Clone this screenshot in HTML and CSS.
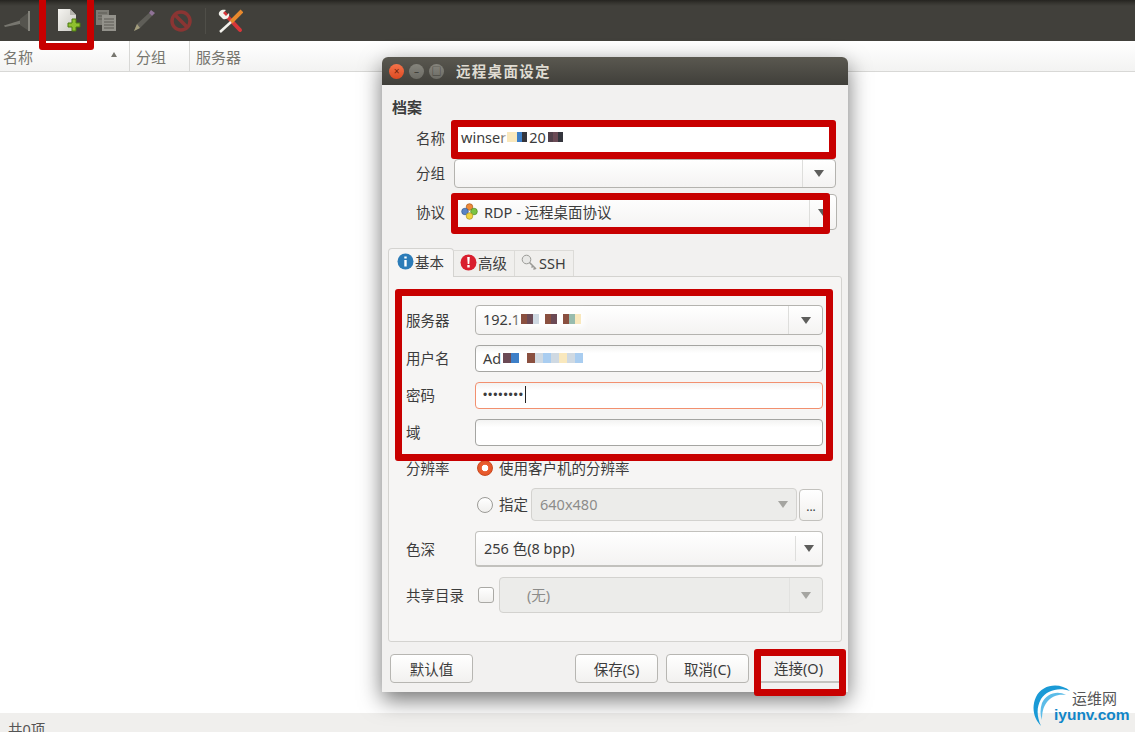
FILE: index.html

```html
<!DOCTYPE html>
<html lang="zh-CN">
<head>
  <meta charset="UTF-8">
  <title>远程桌面设定</title>
  <link rel="stylesheet" href="styles.css">
</head>
<body>
  <div class="app">
    <div class="toolbar">
      <svg class="tool tool-plug" width="28" height="24" viewBox="0 0 28 24">
        <path d="M1 16.5 L17 11.5 L17 15 L2 18 Z" fill="#77766f"/>
        <path d="M17 10 L26 3 L26 22 L17 16 Z" fill="#55544e"/>
        <path d="M26 2 L26 22" stroke="#85847c" stroke-width="2"/>
      </svg>
      <svg class="tool tool-new" width="24" height="25" viewBox="0 0 24 25">
        <defs>
          <linearGradient id="page" x1="0" y1="0" x2="1" y2="1">
            <stop offset="0" stop-color="#f6f5f1"/>
            <stop offset="1" stop-color="#c9c8c2"/>
          </linearGradient>
        </defs>
        <path d="M0 1 H12 L18 7 V23 H0 Z" fill="url(#page)"/>
        <path d="M12 1 V7 H18 Z" fill="#b5b4ae"/>
        <path d="M14 11 H18 V15 H22 V19 H18 V23 H14 V19 H10 V15 H14 Z" fill="#8fc02f" stroke="#4d7a12" stroke-width="1"/>
      </svg>
      <svg class="tool tool-copy" width="22" height="23" viewBox="0 0 22 23">
        <rect x="1" y="1" width="13" height="15" fill="#7d7c75"/>
        <path d="M3 4 H12 M3 7 H12 M3 10 H7" stroke="#5c5b55"/>
        <rect x="7" y="6" width="14" height="16" fill="#93928b"/>
        <path d="M9 10 H19 M9 13 H19 M9 16 H19 M9 19 H19" stroke="#5c5b55"/>
      </svg>
      <svg class="tool tool-pencil" width="24" height="24" viewBox="0 0 24 24">
        <path d="M2 22 L5 15 L17 4 L20 7 L8 19 Z" fill="#5f5e58"/>
        <path d="M2 22 L5 15 L8 19 Z" fill="#a39d7c"/>
        <path d="M17 4 L19 1 L23 4 L20 7 Z" fill="#8f7396"/>
      </svg>
      <svg class="tool tool-stop" width="22" height="22" viewBox="0 0 22 22">
        <circle cx="11" cy="11" r="9" fill="none" stroke="#8a3533" stroke-width="3.5"/>
        <path d="M5 5 L17 17" stroke="#8a3533" stroke-width="3.5"/>
      </svg>
      <span class="tool-sep"></span>
      <svg class="tool tool-prefs" width="25" height="24" viewBox="0 0 25 24">
        <path d="M6 4 L22 21" stroke="#d8363a" stroke-width="4" stroke-linecap="round"/>
        <path d="M24 2 L13 13" stroke="#e8892d" stroke-width="4"/>
        <path d="M13 13 L2 23" stroke="#f2f1ec" stroke-width="2.5"/>
        <path d="M1 6 C0 2 4 0 8 1 L5 4 L8 7 L11 4 C12 8 9 11 5 10 L3 8 Z" fill="#f2f1ec"/>
      </svg>
    </div>

    <div class="list-head">
      <div class="col col-name">名称<span class="sort-arrow"></span></div>
      <div class="col col-group">分组</div>
      <div class="col col-server">服务器</div>
    </div>

    <div class="list-body"></div>
    <div class="statusbar">共0项</div>
  </div>

  <div class="dialog">
    <div class="titlebar">
      <span class="win-btn win-close">×</span>
      <span class="win-btn win-min">–</span>
      <span class="win-btn win-max">□</span>
      <span class="win-title">远程桌面设定</span>
    </div>
    <div class="dialog-body">
      <div class="section-title">档案</div>

      <div class="row row-name">
        <label class="row-label">名称</label>
        <div class="entry entry-name">winser<span class="mosaic"><i class="c1"></i><i class="c1"></i><i class="c2"></i><i class="c3"></i></span><span class="gap-txt">20</span><span class="mosaic"><i class="c4"></i><i class="c5"></i><i class="c3"></i></span></div>
      </div>
      <div class="row row-group">
        <label class="row-label">分组</label>
        <div class="combo combo-wide"><span class="combo-text"></span><span class="combo-arrow"><b></b></span></div>
      </div>
      <div class="row row-proto">
        <label class="row-label">协议</label>
        <div class="combo combo-wide combo-proto">
          <span class="combo-text">
            <svg class="proto-icon" width="17" height="17" viewBox="0 0 17 17">
              <circle cx="8.5" cy="4" r="3.3" fill="#ee8a3a" stroke="#a95c20" stroke-width=".7"/>
              <circle cx="4" cy="8.5" r="3.3" fill="#5b84c4" stroke="#345a92" stroke-width=".7"/>
              <circle cx="13" cy="8.5" r="3.3" fill="#7cc342" stroke="#4d8a20" stroke-width=".7"/>
              <circle cx="8.5" cy="13" r="3.3" fill="#f2d43d" stroke="#a8902a" stroke-width=".7"/>
            </svg>
            RDP - 远程桌面协议
          </span>
          <span class="combo-arrow"><b></b></span>
        </div>
      </div>

      <div class="tabs">
        <div class="tab tab-active">
          <svg width="17" height="17" viewBox="0 0 17 17">
            <circle cx="8.5" cy="8.5" r="8" fill="#2c7cb8"/>
            <path d="M7.3 3.5 H9.7 V5.6 H7.3 Z M7.3 7 H9.7 V13.5 H7.3 Z" fill="#fff"/>
          </svg>基本
        </div>
        <div class="tab">
          <svg width="17" height="17" viewBox="0 0 17 17">
            <circle cx="8.5" cy="8.5" r="8" fill="#d91f2e"/>
            <path d="M7.2 3 H9.8 L9.3 10 H7.7 Z M7.3 11 H9.7 V13.5 H7.3 Z" fill="#fff"/>
          </svg>高级
        </div>
        <div class="tab">
          <svg width="17" height="17" viewBox="0 0 17 17">
            <circle cx="5.5" cy="5.5" r="4.3" fill="#e8e8e6" stroke="#9a9a96"/>
            <path d="M8.5 8.5 L15 15 M12 12 L10.5 13.5 M14 14 L12.5 15.5" stroke="#9a9a96" stroke-width="1.6" fill="none"/>
          </svg>SSH
        </div>
      </div>

      <div class="panel">
        <div class="form-row form-server">
          <label class="form-label">服务器</label>
          <div class="combo"><span class="combo-text">192.1<span class="mosaic mosaic-server"><i class="c6"></i><i class="c5"></i><i class="c7"></i><i class="c8"></i><i class="c6"></i><i class="c5"></i><i class="c8"></i><i class="c6"></i><i class="c9"></i><i class="c1"></i></span></span><span class="combo-arrow combo-arrow-server"><b></b></span></div>
        </div>
        <div class="form-row form-entry">
          <label class="form-label">用户名</label>
          <div class="entry">Ad<span class="mosaic mosaic-user"><i class="c5"></i><i class="c2"></i><i class="c8"></i><i class="c6"></i><i class="c7"></i><i class="c10"></i><i class="c7"></i><i class="c1"></i><i class="c7"></i><i class="c10"></i></span></div>
        </div>
        <div class="form-row form-entry">
          <label class="form-label">密码</label>
          <div class="entry entry-focus"><span class="dots">••••••••</span><span class="caret"></span></div>
        </div>
        <div class="form-row form-entry">
          <label class="form-label">域</label>
          <div class="entry"></div>
        </div>

        <div class="form-row form-res">
          <label class="form-label">分辨率</label>
          <span class="radio radio-on"></span>
          <span class="radio-text">使用客户机的分辨率</span>
        </div>
        <div class="form-row form-custom">
          <span class="form-label"></span>
          <span class="radio"></span>
          <span class="radio-text">指定</span>
          <div class="combo combo-off combo-size"><span class="combo-text">640x480</span><span class="combo-arrow"><b></b></span></div>
          <div class="more-btn">...</div>
        </div>
        <div class="form-row form-depth">
          <label class="form-label">色深</label>
          <div class="combo combo-raised"><span class="combo-text">256 色(8 bpp)</span><span class="combo-arrow"><b></b></span></div>
        </div>
        <div class="form-row form-share">
          <label class="form-label">共享目录</label>
          <span class="check"></span>
          <div class="combo combo-off"><span class="combo-text combo-none">(无)</span><span class="combo-arrow"><b></b></span></div>
        </div>
      </div>

      <div class="actions">
        <button class="btn">默认值</button>
        <button class="btn btn-save">保存(S)</button>
        <button class="btn">取消(C)</button>
        <button class="btn btn-connect">连接(O)</button>
      </div>
    </div>
  </div>

  <!-- red marks drawn over the screenshot -->
  <div class="mark mark-tool"></div>
  <div class="mark mark-name"></div>
  <div class="mark mark-proto"></div>
  <div class="mark mark-panel"></div>
  <div class="mark mark-connect"></div>

  <div class="logo">
    <svg class="logo-arc" width="44" height="44" viewBox="0 0 44 44">
      <path d="M38 7 C28 -2 10 0 4 13 C-1 24 2 35 9 42 C5 33 4 24 9 15 C15 6 27 3 38 7 Z" fill="#1a9ad6"/>
      <path d="M34 11 C25 6 14 10 10 19 C8 25 8 31 10 36 C10 29 11 23 15 18 C20 12 26 10 34 11 Z" fill="#5cbce8"/>
    </svg>
    <span class="logo-cn">运维网</span>
    <span class="logo-en">iyunv.com</span>
  </div>
</body>
</html>
```

FILE: styles.css

```css
* {
  box-sizing: border-box;
}
html, body {
  height: 100%;
}
body {
  margin: 0;
  overflow: hidden;
  background: #fff;
  color: #3c3c3c;
  font-family: "Noto Sans", "Noto Sans CJK SC", sans-serif;
  font-size: 14.5px;
}
.app {
  display: flex;
  flex-direction: column;
  height: 732px;
}

/* toolbar */
.toolbar {
  display: flex;
  align-items: center;
  height: 41px;
  flex: none;
  padding: 0 0 0 3px;
  background: linear-gradient(to bottom, #252420 0, #35342f 3px, #41403b 6px, #41403b 100%);
}
.tool {
  flex: none;
}
.tool-plug { margin-right: 27px; }
.tool-new { margin: 0 13px 0 0; }
.tool-copy { margin-right: 15px; }
.tool-pencil { margin-right: 14px; }
.tool-stop { margin-right: 13px; }
.tool-sep {
  width: 1px;
  height: 26px;
  background: #4f4e48;
  margin-right: 12px;
}

/* list header */
.list-head {
  display: flex;
  flex: none;
  height: 31px;
  background: linear-gradient(to bottom, #fff, #f3f3f2);
  border-bottom: 1px solid #d8d8d6;
  color: #77766f;
  font-size: 15px;
}
.col {
  display: flex;
  align-items: center;
  border-right: 1px solid #d8d8d6;
}
.col-name {
  width: 130px;
  padding-left: 3px;
  position: relative;
}
.col-group {
  width: 60px;
  padding-left: 6px;
}
.col-server {
  padding-left: 6px;
  border-right: 0;
}
.sort-arrow {
  position: absolute;
  left: 111px;
  top: 11px;
  border-left: 3.5px solid transparent;
  border-right: 3.5px solid transparent;
  border-bottom: 5px solid #77766f;
}
.list-body {
  flex: 1;
}
.statusbar {
  flex: none;
  height: 19px;
  padding: 5px 0 0 8px;
  background: #f0efed;
  color: #555;
  line-height: 22px;
  overflow: hidden;
}

/* dialog */
.dialog {
  position: absolute;
  left: 382px;
  top: 57px;
  width: 466px;
  height: 635px;
  background: #f2f1f0;
  border-radius: 6px 6px 0 0;
  box-shadow: 0 8px 22px rgba(0, 0, 0, 0.55);
}
.titlebar {
  display: flex;
  align-items: center;
  height: 28px;
  padding-left: 7px;
  background: linear-gradient(to bottom, #5a5850, #403f3a);
  border-radius: 6px 6px 0 0;
}
.win-btn {
  display: flex;
  align-items: center;
  justify-content: center;
  width: 15px;
  height: 15px;
  margin-right: 5px;
  border-radius: 50%;
  background: linear-gradient(to bottom, #86857d, #6c6b64);
  color: #3d3c37;
  font-size: 10px;
  line-height: 1;
}
.win-close {
  background: linear-gradient(to bottom, #f4734a, #dd4a22);
  color: #70230c;
}
.win-title {
  margin-left: 7px;
  padding-bottom: 2px;
  color: #dfdbd2;
  font-size: 14.5px;
  font-weight: 700;
  letter-spacing: 1.3px;
}
.dialog-body {
  padding: 14px 6px 0;
}
.section-title {
  height: 16px;
  margin-left: 4px;
  line-height: 16px;
  font-size: 15px;
  font-weight: 700;
}

.row {
  display: flex;
  align-items: center;
  margin-left: -6px;
  margin-right: -6px;
}
.row-label {
  width: 63px;
  margin-right: 9px;
  padding-bottom: 2px;
  text-align: right;
  flex: none;
}
.row-name {
  height: 31px;
  margin-top: 9px;
  padding-right: 12px;
}
.row-name .row-label {
  padding-bottom: 5px;
}
.row-group {
  height: 29px;
  margin-top: 4px;
  padding-right: 12px;
}
.row-proto {
  height: 36px;
  margin-top: 6px;
  padding-right: 11px;
}

/* inputs */
.entry {
  display: flex;
  align-items: center;
  flex: 1;
  height: 100%;
  padding: 0 0 2px 7px;
  background: linear-gradient(to bottom, #f3f3f2, #fff 30%);
  border: 1px solid #a5a5a2;
  border-radius: 4px;
  white-space: nowrap;
}
.entry-name {
  padding: 0 0 5px 6px;
  background: #fff;
}
.entry-focus {
  border-color: #f2906f;
}
.dots {
  font-family: "Liberation Sans", sans-serif;
  font-size: 12px;
  letter-spacing: 0.9px;
}
.caret {
  width: 1px;
  height: 17px;
  background: #222;
  margin-left: 1px;
}
.combo {
  display: flex;
  flex: 1;
  height: 100%;
  background: linear-gradient(to bottom, #fff, #f4f3f2);
  border: 1px solid #b4b3af;
  border-radius: 4px;
  min-width: 0;
}
.combo-text {
  display: flex;
  align-items: center;
  flex: 1;
  padding: 0 0 2px 7px;
  white-space: nowrap;
}
.combo-arrow {
  display: flex;
  align-items: center;
  justify-content: center;
  flex: none;
  width: 33px;
  margin: 0;
  border-left: 1px solid #dededc;
}
.combo-arrow-server {
  width: 34px;
}
.combo-arrow b {
  border-left: 5px solid transparent;
  border-right: 5px solid transparent;
  border-top: 7px solid #5e5e5c;
}
.combo-proto .combo-text {
  padding-left: 6px;
}
.combo-proto .combo-arrow {
  width: 27px;
}
.proto-icon {
  margin-right: 6px;
  flex: none;
}
.combo-raised {
  border-bottom-width: 2px;
  border-color: #c2c1bd;
}
.combo-raised .combo-text {
  padding-left: 8px;
}
.combo-raised .combo-arrow {
  width: 27px;
  margin: 4px 0;
}
.combo-off {
  background: #ececea;
  border-color: #d3d2cf;
  color: #8c8c8a;
}
.combo-off .combo-arrow {
  border-left-color: #e2e2e0;
}
.combo-off .combo-arrow b {
  border-top-color: #a5a5a1;
}
.combo-none {
  padding-left: 27px;
}

/* pixelated parts of the screenshot */
.mosaic {
  display: inline-flex;
  height: 10px;
  margin: 0 1px;
  box-shadow: 0 0 6px 3px #fff;
  background: #fff;
}
.mosaic i {
  width: 5px;
  height: 100%;
}
.mosaic-user {
  margin-left: 2px;
  box-shadow: 0 0 3px 1px #fff;
}
.mosaic-user i {
  width: 8px;
}
.mosaic-server i {
  width: 6px;
}
.gap-txt {
  position: relative;
  margin: 0 1px;
}
.c1 { background: #f9e8bd; }
.c2 { background: #3d7fc8; }
.c3 { background: #34353d; }
.c4 { background: #51404a; }
.c5 { background: #6b4a55; }
.c6 { background: #8a5040; }
.c7 { background: #cfd9e2; }
.c8 { background: #fff; }
.c9 { background: #98bcae; }
.c10 { background: #a9cdf0; }

/* tabs */
.tabs {
  display: flex;
  align-items: flex-end;
  height: 28px;
  margin-top: 18px;
  padding-left: 0;
}
.tab {
  display: flex;
  align-items: center;
  height: 26px;
  padding: 0 7px 2px 6px;
  margin-left: 0;
  border: 1px solid #dcdbd8;
  border-width: 1px 1px 0 0;
  background: #f0efed;
  white-space: nowrap;
}
.tab svg {
  margin-right: 1px;
}
.tab-active {
  height: 29px;
  margin-bottom: -1px;
  padding: 0 9px 4px 8px;
  background: #f6f5f4;
  border: 1px solid #d4d3d0;
  border-bottom: 0;
  border-radius: 4px 4px 0 0;
  position: relative;
  z-index: 1;
}
.panel {
  height: 366px;
  padding: 28px 18px 0 17px;
  background: #f6f5f4;
  border: 1px solid #d4d3d0;
  border-radius: 0 3px 3px 3px;
}
.form-row {
  display: flex;
  align-items: center;
}
.form-label {
  flex: none;
  width: 69px;
  padding-bottom: 2px;
  white-space: nowrap;
}
.form-server { height: 30px; }
.form-entry { height: 27px; margin-top: 10px; }
.form-res { height: 18px; margin-top: 13px; }
.form-custom { height: 33px; margin-top: 11px; }
.form-depth { height: 36px; margin-top: 10px; }
.form-share { height: 36px; margin-top: 10px; }

.radio {
  flex: none;
  width: 16px;
  height: 16px;
  margin: 0 6px 0 2px;
  background: linear-gradient(to bottom, #fff, #f0efed);
  border: 1px solid #9c9b97;
  border-radius: 50%;
}
.radio-on {
  background: radial-gradient(circle, #fff 0, #fff 3px, #e95d30 3.6px, #e25224 100%);
  border-color: #c9491f;
}
.radio-text {
  flex: none;
  padding-bottom: 2px;
  white-space: nowrap;
}
.combo-size {
  margin-left: 3px;
  margin-right: 2px;
}
.combo-size .combo-arrow {
  width: 27px;
  border-left-color: #ececea;
}
.combo-size .combo-text {
  padding-left: 8px;
}
.more-btn {
  flex: none;
  width: 24px;
  height: 32px;
  background: linear-gradient(to bottom, #fff, #f1f0ee);
  border: 1px solid #c2c1bd;
  border-radius: 4px;
  text-align: center;
  line-height: 34px;
  font-size: 12px;
}
.check {
  flex: none;
  width: 16px;
  height: 16px;
  margin: 0 5px 0 3px;
  background: linear-gradient(to bottom, #fff, #f0efed);
  border: 1px solid #aaa9a5;
  border-radius: 3px;
}

/* bottom buttons */
.actions {
  display: flex;
  height: 29px;
  margin: 12px 3px 0 2px;
}
.btn {
  width: 83px;
  height: 29px;
  padding: 0 0 1px;
  background: linear-gradient(to bottom, #fff, #f2f1ef);
  border: 1px solid #b7b6b2;
  border-radius: 4px;
  color: #3c3c3c;
  font: inherit;
}
.btn + .btn {
  margin-left: 8px;
}
.btn-save {
  margin-left: auto !important;
}
.actions .btn-connect {
  width: 78px;
  margin-left: 12px;
  padding: 0 3px 0 0;
  border: 0;
  border-bottom: 2px solid #c4c3bf;
  border-radius: 0;
  background: #f4f3f2;
}

/* red marks */
.mark {
  position: absolute;
  border: 7px solid #c80000;
  border-radius: 3px;
}
.mark-tool {
  left: 39px;
  top: -7px;
  width: 55px;
  height: 57px;
}
.mark-name {
  left: 451px;
  top: 120px;
  width: 385px;
  height: 39px;
}
.mark-proto {
  left: 451px;
  top: 193px;
  width: 379px;
  height: 41px;
}
.mark-panel {
  left: 395px;
  top: 289px;
  width: 438px;
  height: 172px;
}
.mark-connect {
  left: 754px;
  top: 649px;
  width: 92px;
  height: 47px;
}

/* watermark */
.logo {
  position: absolute;
  left: 1032px;
  top: 684px;
  width: 100px;
  height: 44px;
}
.logo-arc {
  position: absolute;
  left: 0;
  top: 0;
}
.logo-cn {
  position: absolute;
  left: 40px;
  top: 5px;
  color: #555;
  font-size: 15px;
  line-height: 18px;
}
.logo-en {
  position: absolute;
  left: 22px;
  top: 22px;
  color: #1186c8;
  font-family: "Liberation Sans", sans-serif;
  font-size: 15.5px;
  font-weight: 700;
  line-height: 18px;
  white-space: nowrap;
}
```
